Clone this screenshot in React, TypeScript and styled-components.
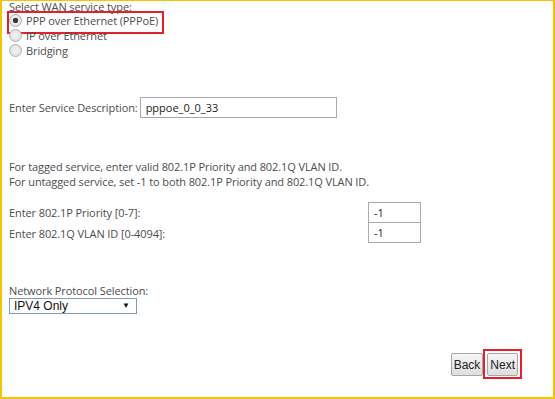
import React from 'react'
import styled, {createGlobalStyle} from 'styled-components';

const GlobalStyle = createGlobalStyle`
    html, body {
        margin: 0;
        padding: 0;
        background: #fff;
    }
    body {
        font-family: "Open Sans", "Noto Sans", sans-serif;
        font-size: 11px;
        letter-spacing: -0.1px;
        color: #4d4d4d;
    }
`;

const Frame = styled.div`
    position: relative;
    box-sizing: border-box;
    width: 555px;
    height: 399px;
    border: 2px solid #f5c400;
    border-top-width: 1px;
    overflow: hidden;
    padding: 0 0 0 7px;
`;

const Title = styled.div`
    line-height: 12px;
`;

const RadioRow = styled.label`
    position: relative;
    display: flex;
    align-items: center;
    height: 15px;
    gap: 4px;
`;

const RadioDot = styled.span<{checked?: boolean}>`
    box-sizing: border-box;
    width: 13px;
    height: 13px;
    border-radius: 50%;
    border: 1px solid #b0b0b0;
    background: radial-gradient(circle, ${p => p.checked ? '#3a3a3a 0, #3a3a3a 2.5px, #ececec 3px' : '#f4f4f4 0'}, #dadada 100%);
`;

// red annotation frame drawn over a control
const Highlight = styled.span<{top: number; left: number; right: number; bottom: number}>`
    position: absolute;
    top: ${p => p.top}px;
    left: ${p => p.left}px;
    right: ${p => p.right}px;
    bottom: ${p => p.bottom}px;
    border: 2px solid #e3202b;
    pointer-events: none;
`;

const Row = styled.div<{mt: number}>`
    display: flex;
    align-items: center;
    gap: 2px;
    margin-top: ${p => p.mt}px;
`;

const TextBox = styled.input<{w: number}>`
    box-sizing: border-box;
    width: ${p => p.w}px;
    height: 21px;
    margin: 0;
    border: 1px solid #a9a9a9;
    padding: 0 5px;
    font-family: "Open Sans", "Noto Sans", sans-serif;
    font-size: 11px;
    color: #222;
    outline: none;
`;

const Note = styled.div<{mt: number}>`
    margin-top: ${p => p.mt}px;
    line-height: 15px;
`;

const VlanGrid = styled.div`
    display: grid;
    grid-template-columns: 359px 53px;
    margin-top: 13px;
    align-items: center;
    & > input + span + input { margin-top: -1px; }
`;

const SelectWrap = styled.div`
    margin-top: 41px;
    line-height: 14px;
`;

const SelectBox = styled.div`
    box-sizing: border-box;
    display: flex;
    align-items: center;
    justify-content: space-between;
    width: 128px;
    height: 16px;
    padding: 0 6px 0 4px;
    border: 1px solid #7f9db9;
    font-family: "Liberation Sans", Arial, sans-serif;
    font-size: 12px;
    letter-spacing: 0;
    color: #111;
`;

const Arrow = styled.span`
    font-size: 8px;
    color: #111;
`;

const ButtonBar = styled.div`
    display: flex;
    justify-content: flex-end;
    gap: 4px;
    margin-top: 39px;
    padding-right: 35px;
`;

const ButtonHolder = styled.span`
    position: relative;
    display: inline-flex;
`;

const Button = styled.button`
    box-sizing: border-box;
    height: 23px;
    padding: 0 2px;
    border: 1px solid #a6a6a6;
    border-radius: 2px;
    background: linear-gradient(#f6f6f6, #dedede);
    font-family: "Liberation Sans", Arial, sans-serif;
    font-size: 12px;
    color: #222;
`;

export default function App() {
    return (
        <Frame>
            <GlobalStyle/>
            <Title>Select WAN service type:</Title>
            <RadioRow>
                <RadioDot checked/>PPP over Ethernet (PPPoE)
                <Highlight top={-2} left={-2} right={389} bottom={-6}/>
            </RadioRow>
            <RadioRow><RadioDot/>IP over Ethernet</RadioRow>
            <RadioRow><RadioDot/>Bridging</RadioRow>

            <Row mt={39}>
                <span>Enter Service Description:</span>
                <TextBox w={197} defaultValue="pppoe_0_0_33"/>
            </Row>

            <Note mt={41}>
                For tagged service, enter valid 802.1P Priority and 802.1Q VLAN ID.<br/>
                For untagged service, set -1 to both 802.1P Priority and 802.1Q VLAN ID.
            </Note>

            <VlanGrid>
                <span>Enter 802.1P Priority [0-7]:</span>
                <TextBox w={53} defaultValue="-1"/>
                <span>Enter 802.1Q VLAN ID [0-4094]:</span>
                <TextBox w={53} defaultValue="-1"/>
            </VlanGrid>

            <SelectWrap>
                Network Protocol Selection:
                <SelectBox>IPV4 Only<Arrow>▼</Arrow></SelectBox>
            </SelectWrap>

            <ButtonBar>
                <Button>Back</Button>
                <ButtonHolder>
                    <Button>Next</Button>
                    <Highlight top={-4} left={-4} right={-4} bottom={-3}/>
                </ButtonHolder>
            </ButtonBar>
        </Frame>
    )
}
